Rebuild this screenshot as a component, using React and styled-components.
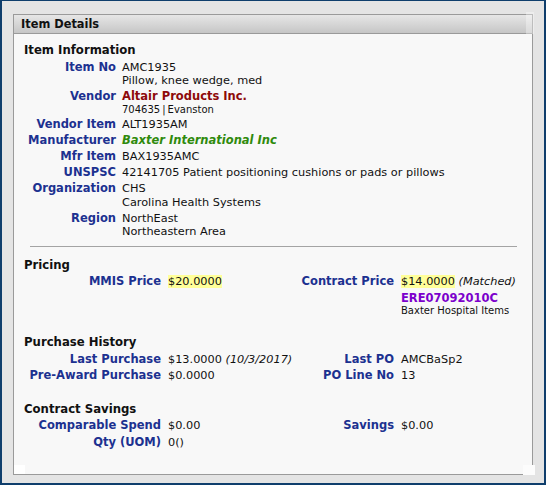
import React from "react";
import styled, { createGlobalStyle } from "styled-components";

const Global = createGlobalStyle`
  html, body { margin: 0; padding: 0; background: #e4e4e4; }
  body { font-family: "DejaVu Sans", Verdana, sans-serif; color: #111; }
  * { box-sizing: border-box; }
`;

const Frame = styled.div`
  width: 546px;
  height: 485px;
  border: 2px solid #0f3e6c;
  border-top-width: 1px;
  background: #e4e4e4;
  padding: 13px 11px 8px 11px;
  display: flex;
`;

const Panel = styled.div`
  position: relative;
  flex: 1;
  border: 1px solid #9a9a9a;
  background: #f8f8f8;
  display: flex;
  flex-direction: column;
`;

const Corner = styled.span`
  position: absolute;
  background: ${(p) => p.$bg};
  width: ${(p) => p.$w}px;
  height: ${(p) => p.$h}px;
  ${(p) => p.$pos}
`;

const Header = styled.div`
  height: 19px;
  border-bottom: 1px solid #9a9a9a;
  background: linear-gradient(#e6e6e6, #d6d6d6 50%, #c6c6c6);
  font-weight: bold;
  font-size: 11.4px;
  line-height: 18px;
  padding-left: 7px;
  color: #111;
`;

const Body = styled.div`
  padding: 8px 15px 0 10px;
`;

const Section = styled.div`
  & + & { margin-top: 17px; }
`;

const Title = styled.div`
  font-weight: bold;
  font-size: 11.7px;
  line-height: 16px;
  color: #111;
  margin-bottom: ${(p) => p.$mb ?? 1}px;
`;

const Grid = styled.div`
  display: grid;
  grid-template-columns: ${(p) => p.$cols};
  column-gap: ${(p) => p.$gap}px;
  align-items: start;
  --pad: ${(p) => p.$pad}px;
`;

const Label = styled.div`
  font-weight: bold;
  font-size: 11.5px;
  line-height: 13.5px;
  padding: var(--pad) 0;
  color: #1c3190;
  text-align: right;
  white-space: nowrap;
`;

const Value = styled.div`
  font-size: 11.3px;
  line-height: 13.5px;
  padding: var(--pad) 0;
  color: #111;
  white-space: nowrap;
`;

const Line = styled.div``;

const SmallLine = styled.div`
  font-size: 10px;
  line-height: ${(p) => p.$lh || 12}px;
`;

const Pipe = styled.span`
  margin: 0 2px;
`;

const Strong = styled.span`
  font-weight: bold;
  font-size: 11.5px;
  color: ${(p) => p.$color};
  font-style: ${(p) => (p.$italic ? "italic" : "normal")};
`;

const CodeLine = styled.div`
  font-weight: bold;
  font-size: 11.5px;
  line-height: 16px;
  padding-top: 1px;
  color: #7c00cc;
`;

const Hi = styled.span`
  background: #ffff99;
`;

const Em = styled.span`
  font-style: italic;
`;

const Divider = styled.div`
  height: 1px;
  background: #a4a4a4;
  margin: 6px 0 10px 6px;
`;

const INFO_COLS = "92px 1fr";
const TWO_COLS = "137px 110px 109px 1fr";

export default function App() {
  return (
    <>
      <Global />
      <Frame>
        <Panel>
          <Corner $bg="rgba(255,255,255,0.35)" $w={8} $h={22} $pos="top: -3px; right: -2px;" />
          <Corner $bg="#ffffff" $w={11} $h={9} $pos="bottom: 0; left: 0;" />
          <Corner $bg="#fcfcfc" $w={12} $h={10} $pos="bottom: -1px; right: -3px;" />
          <Header>Item Details</Header>
          <Body>
            <Section>
              <Title $mb={1.5}>Item Information</Title>
              <Grid $cols={INFO_COLS} $gap={6} $pad={1.25}>
                <Label>Item No</Label>
                <Value>
                  <Line>AMC1935</Line>
                  <Line>Pillow, knee wedge, med</Line>
                </Value>
                <Label>Vendor</Label>
                <Value>
                  <Line>
                    <Strong $color="#8e0a0a">Altair Products Inc.</Strong>
                  </Line>
                  <SmallLine>
                    704635<Pipe>|</Pipe>Evanston
                  </SmallLine>
                </Value>
                <Label>Vendor Item</Label>
                <Value>ALT1935AM</Value>
                <Label>Manufacturer</Label>
                <Value>
                  <Strong $color="#2f8a0c" $italic>Baxter International Inc</Strong>
                </Value>
                <Label>Mfr Item</Label>
                <Value>BAX1935AMC</Value>
                <Label>UNSPSC</Label>
                <Value>42141705 Patient positioning cushions or pads or pillows</Value>
                <Label>Organization</Label>
                <Value>
                  <Line>CHS</Line>
                  <Line>Carolina Health Systems</Line>
                </Value>
                <Label>Region</Label>
                <Value>
                  <Line>NorthEast</Line>
                  <Line>Northeastern Area</Line>
                </Value>
              </Grid>
            </Section>
            <Divider />
            <Section>
              <Title>Pricing</Title>
              <Grid $cols={TWO_COLS} $gap={7} $pad={1.4}>
                <Label>MMIS Price</Label>
                <Value>
                  <Hi>$20.0000</Hi>
                </Value>
                <Label>Contract Price</Label>
                <Value>
                  <Line>
                    <Hi>$14.0000</Hi> <Em>(Matched)</Em>
                  </Line>
                  <CodeLine>ERE07092010C</CodeLine>
                  <SmallLine $lh={10}>Baxter Hospital Items</SmallLine>
                </Value>
              </Grid>
            </Section>
            <Section>
              <Title>Purchase History</Title>
              <Grid $cols={TWO_COLS} $gap={7} $pad={1.4}>
                <Label>Last Purchase</Label>
                <Value>
                  $13.0000 <Em>(10/3/2017)</Em>
                </Value>
                <Label>Last PO</Label>
                <Value>AMCBaSp2</Value>
                <Label>Pre-Award Purchase</Label>
                <Value>$0.0000</Value>
                <Label>PO Line No</Label>
                <Value>13</Value>
              </Grid>
            </Section>
            <Section>
              <Title>Contract Savings</Title>
              <Grid $cols={TWO_COLS} $gap={7} $pad={1.4}>
                <Label>Comparable Spend</Label>
                <Value>$0.00</Value>
                <Label>Savings</Label>
                <Value>$0.00</Value>
                <Label>Qty (UOM)</Label>
                <Value>0()</Value>
              </Grid>
            </Section>
          </Body>
        </Panel>
      </Frame>
    </>
  );
}
